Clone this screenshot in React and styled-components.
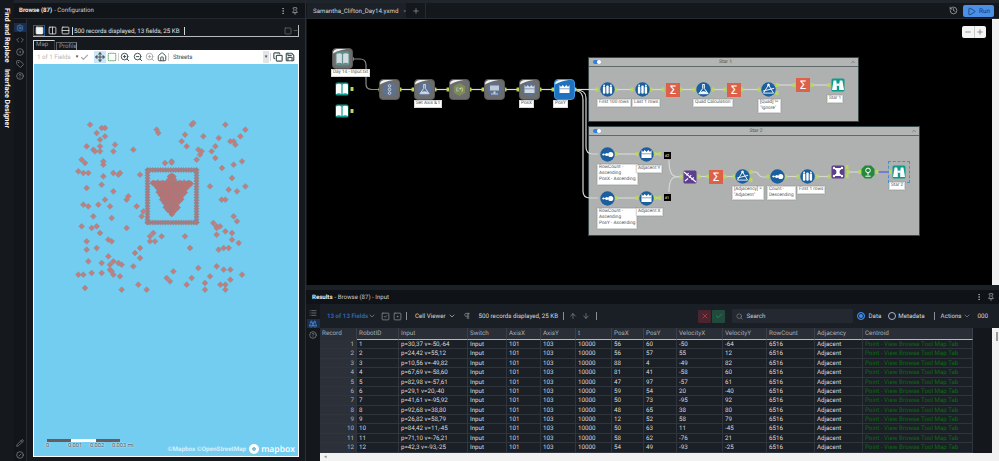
import React from 'react'
import styled, { createGlobalStyle } from 'styled-components'
import {
  ArrowDown, ArrowUp, Binoculars, Check, ChevronDown, ChevronUp, CircleDot, CircleHelp, CircleSlash, Code,
  Columns2, Copy, EllipsisVertical, History, House, List, Minus, Move, Pencil, Pilcrow, Pin, Play, Plus, Rows2,
  Save, Search, Settings, Square, SquareCheck, SquareDashed, SquareDot, Tag, X, ZoomIn, ZoomOut,
} from 'lucide-react'

const GlobalStyle = createGlobalStyle`
  html, body { margin: 0; padding: 0; background: #14171c; }
  * { box-sizing: border-box; }
`

const Page = styled.div`
  width: 999px;
  height: 461px;
  display: flex;
  overflow: hidden;
  background: #14171c;
  color: #d8dade;
  font-family: Roboto, "Noto Sans", sans-serif;
  font-size: 6.2px;
  text-rendering: geometricPrecision;
`

/* left rail */
const Rail = styled.div`
  width: 14px;
  padding-top: 8px;
  display: flex;
  flex-direction: column;
  align-items: center;
  gap: 6px;
  background: #15181d;
`
const RailLabel = styled.div`
  writing-mode: vertical-rl;
  color: #f2f2f2;
  font-weight: 700;
  font-size: 7.1px;
  line-height: 8px;
  white-space: nowrap;
`

/* configuration panel */
const ConfigPanel = styled.div`
  width: 292px;
  display: flex;
  flex-direction: column;
  border-top: 3px solid #20242b;
  border-right: 1px solid #2a2e35;
`
const PanelHead = styled.div`
  height: 16px;
  flex: none;
  display: flex;
  align-items: center;
  gap: 2px;
  padding: 0 6px 0 5px;
  background: #111419;
  color: #c9ccd1;
  font-size: 6.1px;
  border-bottom: 1px solid #23272e;
  b { color: #eceef0; font-weight: 700; }
`
const Spacer = styled.div`flex: 1;`
const HeadIcons = styled.div`
  display: flex;
  gap: 4px;
  color: #b9bcc2;
`
const ConfigBody = styled.div`
  flex: 1;
  display: flex;
  min-height: 0;
`
const IconStrip = styled.div`
  width: 13px;
  flex: none;
  display: flex;
  flex-direction: column;
  align-items: center;
  gap: 3px;
  padding: 4px 0 2px;
  background: #12151a;
  border-right: 1px solid #262a31;
  color: #8d9198;
`
const StripButton = styled.div`
  width: 13px;
  height: 9px;
  display: flex;
  align-items: center;
  justify-content: center;
  background: ${(p) => (p.$active ? '#1b2d4a' : 'transparent')};
  color: ${(p) => (p.$active ? '#4f8fe0' : 'inherit')};
`
const BrowseBody = styled.div`
  flex: 1;
  min-width: 0;
  display: flex;
  flex-direction: column;
  padding: 6px 6px 4px 6px;
  background: #15181d;
`
const BrowseBar = styled.div`
  height: 12px;
  flex: none;
  display: flex;
  align-items: center;
  gap: 1px;
  color: #e2e3e5;
  border-bottom: 1px solid #b9bcbf;
  border-right: 1px solid #b9bcbf;
  font-size: 6.2px;
`
const ViewButton = styled.div`
  width: 12px;
  height: 11px;
  display: flex;
  align-items: center;
  justify-content: center;
  color: #f3f3f3;
  border: 1px solid ${(p) => (p.$active ? '#1f5f9c' : 'transparent')};
`
const BarSep = styled.div`
  width: 1px;
  height: 8px;
  margin: 0 ${(p) => p.$gap ?? 2}px;
  background: ${(p) => p.$color ?? '#d5d6d8'};
`
const MapTabs = styled.div`
  height: 13px;
  flex: none;
  display: flex;
  align-items: flex-end;
  gap: 1px;
  color: #8e9196;
`
const MapTab = styled.div`
  height: ${(p) => (p.$active ? 10 : 8)}px;
  width: ${(p) => (p.$active ? 22 : 21)}px;
  padding-left: 2px;
  line-height: 7px;
  border: 1px solid ${(p) => (p.$active ? '#d6d7d9' : '#5f6267')};
  border-bottom: none;
  border-right-color: ${(p) => (p.$active ? '#3a3d42' : '#8d9095')};
`
const MapFrame = styled.div`
  flex: 1;
  min-height: 0;
  width: 266px;
  display: flex;
  flex-direction: column;
  background: #fff;
  padding: 0 1px 1px 1px;
`
const MapBar = styled.div`
  height: 14px;
  flex: none;
  display: flex;
  align-items: center;
  padding-left: 3px;
  background: #fff;
  color: #46555a;
  font-size: 6.2px;
`
const GreyText = styled.span`
  color: #b4b6b8;
  width: 37px;
  white-space: nowrap;
`
const ToolToggle = styled.div`
  width: 12px;
  height: 12px;
  margin-left: ${(p) => p.$gap ?? 0}px;
  display: flex;
  align-items: center;
  justify-content: center;
  background: ${(p) => (p.$active ? '#cde6f7' : 'transparent')};
`
const StreetsText = styled.span`
  color: #3f4448;
  width: 90px;
  margin-left: 4px;
`
const MiniDrop = styled.div`
  width: 6px;
  height: 12px;
  display: flex;
  align-items: center;
  justify-content: center;
  background: ${(p) => (p.$plain ? 'transparent' : '#e4e4e4')};
  color: #444;
  font-size: 5px;
`
const MapArea = styled.div`
  position: relative;
  flex: 1;
  min-height: 0;
  background: #73cdf0;
  svg { display: block; }
`
const ScaleBox = styled.div`
  position: absolute;
  left: 13px;
  bottom: 6px;
  width: 88px;
`
const ScaleTrack = styled.div`
  width: 73px;
  height: 3px;
  display: flex;
`
const ScaleSeg = styled.div`
  flex: 1;
  background: ${(p) => (p.$light ? '#fff' : '#6a5c5c')};
`
const ScaleNums = styled.div`
  display: flex;
  margin-top: 1px;
  color: #3d4a50;
  font-size: 5.6px;
  line-height: 7px;
  text-shadow: 0 0 2px #fff, 0 0 1px #fff;
  span { width: 24.4px; margin-left: -1px; white-space: nowrap; }
`
const MapCredit = styled.div`
  position: absolute;
  right: 3px;
  bottom: 2px;
  display: flex;
  align-items: center;
  gap: 3px;
  color: rgba(255, 255, 255, 0.72);
  font-weight: 700;
  font-size: 6.3px;
`
const MapboxWord = styled.span`
  display: flex;
  align-items: center;
  gap: 2px;
  color: #fff;
  font-family: "Open Sans", sans-serif;
  font-size: 8.6px;
  font-weight: 600;
  line-height: 10px;
`
const MapboxMark = styled.span`
  width: 10px;
  height: 10px;
  border-radius: 50%;
  background: #fff;
  border: 3px solid #fff;
  box-shadow: inset 0 0 0 1.4px #5fa8cc;
`

/* main column */
const Main = styled.div`
  flex: 1;
  min-width: 0;
  display: flex;
  flex-direction: column;
`
const TabBar = styled.div`
  height: 19px;
  flex: none;
  display: flex;
  align-items: stretch;
  border-top: 3px solid #20242b;
  background: #14171c;
  border-bottom: 1px solid #262a31;
`
const DocTab = styled.div`
  width: 99px;
  margin-left: 1px;
  padding-left: 6px;
  display: flex;
  align-items: center;
  gap: 4px;
  background: #1c2027;
  color: #d5d7da;
  white-space: nowrap;
  font-size: 6.2px;
`
const AddTab = styled.div`
  width: 20px;
  display: flex;
  align-items: center;
  justify-content: center;
  color: #9ca0a6;
  border-right: 1px solid #262a31;
`
const RunButton = styled.div`
  width: 31px;
  height: 12px;
  margin: 2px 5px 0 5px;
  padding-left: 4px;
  display: flex;
  align-items: center;
  gap: 3px;
  border-radius: 2px;
  background: #4a8fe8;
  color: #17345f;
  font-size: 6.4px;
`
const HistoryBox = styled.div`
  display: flex;
  align-items: center;
  color: #a8abb0;
`
const CanvasRow = styled.div`
  height: 266px;
  flex: none;
  display: flex;
`
const Canvas = styled.div`
  position: relative;
  flex: 1;
  margin-left: 1px;
  background: #000;
  overflow: hidden;
`
const WhiteBar = styled.div`
  width: 7px;
  flex: none;
  background: #f2f2f2;
  padding: ${(p) => p.$pad ?? 0}px 0 0 4px;
`
const BarThumb = styled.div`
  width: 2px;
  height: 9px;
  background: #9b9b9b;
`
const ZoomBox = styled.div`
  position: absolute;
  left: 655px;
  top: 7px;
  width: 24px;
  height: 12px;
  display: flex;
  border-radius: 2px;
  background: #f4f4f4;
  color: #8f9296;
`
const ZoomPart = styled.div`
  flex: 1;
  display: flex;
  align-items: center;
  justify-content: center;
  & + & { border-left: 1px solid #c9c9c9; }
`
const StarBox = styled.div`
  position: absolute;
  left: ${(p) => p.$x - 307}px;
  top: ${(p) => p.$y - 19}px;
  width: ${(p) => p.$w}px;
  height: ${(p) => p.$h}px;
  background: #aeb1b0;
  border: 1px solid #38474a;
`
const StarHead = styled.div`
  height: 9px;
  display: flex;
  align-items: center;
  justify-content: space-between;
  padding: 0 2px 0 4px;
  background: #b2b5b4;
  border-bottom: 1px solid #5e6a6a;
  color: #4b5052;
  font-size: 5px;
`
const Toggle = styled.div`
  width: 8px;
  height: 4.5px;
  border-radius: 3px;
  background: #2f7fe0;
  position: relative;
  &::after {
    content: '';
    position: absolute;
    right: 0.5px;
    top: 0.5px;
    width: 3.5px;
    height: 3.5px;
    border-radius: 50%;
    background: #fff;
  }
`
const WireLayer = styled.svg`
  position: absolute;
  left: 0;
  top: 0;
`
const ToolBox = styled.div`
  position: absolute;
  left: ${(p) => p.$x - 307 - p.$size / 2}px;
  top: ${(p) => p.$y - 19 - p.$size / 2}px;
  width: ${(p) => p.$size}px;
  height: ${(p) => p.$size}px;
  svg { display: block; }
`
const SigmaBox = styled(ToolBox)`
  display: flex;
  align-items: center;
  justify-content: center;
  background: #dd6148;
  color: #fff;
  font-family: "DejaVu Sans", sans-serif;
  font-size: 11.5px;
  line-height: 14px;
`
const NodeLabel = styled.div`
  position: absolute;
  left: ${(p) => p.$x - 307}px;
  top: ${(p) => p.$y - 19}px;
  width: max-content;
  min-width: ${(p) => p.$w}px;
  padding: 0 1px;
  background: #fff;
  color: #555;
  font-size: 4.7px;
  line-height: 6.2px;
  border: 0.5px solid #d8d8d8;
  box-shadow: 0 0 1px rgba(0, 0, 0, 0.3);
  white-space: pre;
`
const Tag_ = styled.div`
  position: absolute;
  left: ${(p) => p.$x - 307 - 3.5}px;
  top: ${(p) => p.$y - 19 - 3.5}px;
  width: 7px;
  height: 7px;
  background: #000;
  color: #e8e8e8;
  font-size: 4px;
  line-height: 7px;
  text-align: center;
`
const SelectBox = styled.div`
  position: absolute;
  left: ${888 - 307}px;
  top: ${161 - 19}px;
  width: 22px;
  height: 22px;
  border: 1px dashed #4a8fd0;
`

/* results */
const Results = styled.div`
  flex: 1;
  min-height: 0;
  display: flex;
  flex-direction: column;
  border-top: 5px solid #1c2027;
`
const ResultsHead = styled(PanelHead)`
  height: 14px;
  padding: 0 4px 0 6px;
  background: #0f1216;
  border-bottom: none;
`
const ResultsBody = styled.div`
  flex: 1;
  min-height: 0;
  display: flex;
`
const ResultsStrip = styled(IconStrip)`
  width: 14px;
  padding-top: 4px;
  gap: 2px;
  background: #14171c;
  border-right: none;
`
const ResultsMain = styled.div`
  flex: 1;
  min-width: 0;
  display: flex;
  flex-direction: column;
`
const ResultsTools = styled.div`
  height: 24px;
  flex: none;
  display: flex;
  align-items: center;
  padding-left: 7px;
  background: #1a1e25;
  color: #8b8f96;
`
const FieldsText = styled.span`
  color: #2c6cb5;
  font-weight: 600;
  width: 41px;
  white-space: nowrap;
`
const LightText = styled.span`
  color: #d7d9dc;
  white-space: nowrap;
  margin-left: ${(p) => p.$gap ?? 3}px;
  margin-right: ${(p) => p.$after ?? p.$gap ?? 3}px;
`
const MarkButton = styled.div`
  width: 13px;
  height: 13px;
  display: flex;
  align-items: center;
  justify-content: center;
  border-radius: 1px;
  background: ${(p) => p.$bg};
  color: ${(p) => p.$fg};
  & + & { margin-left: 1px; }
`
const SearchBox = styled.div`
  width: 121px;
  height: 14px;
  margin: 0 4px 0 7px;
  padding-left: 4px;
  display: flex;
  align-items: center;
  gap: 3px;
  border-radius: 1px;
  background: #242830;
  color: #c6c9cd;
`
const Radio = styled.span`
  width: 8px;
  height: 8px;
  flex: none;
  border-radius: 50%;
  border: 1px solid ${(p) => (p.$on ? '#3d8bef' : '#a5b4cc')};
  background: ${(p) => (p.$on ? '#3d8bef' : 'transparent')};
  box-shadow: ${(p) => (p.$on ? 'inset 0 0 0 1px #1a1e25' : 'none')};
`
const TableArea = styled.div`
  flex: 1;
  min-height: 0;
  display: flex;
`
const TableColumn = styled.div`
  width: 653px;
  flex: none;
  display: flex;
  flex-direction: column;
`
const TableRest = styled.div`
  flex: 1;
  background: #14171c;
`
const columns = '37px 42px 69px 39px 34px 35px 36px 32px 33px 46px 44px 48px 48px 110px'
const Grid = styled.div`
  display: grid;
  grid-template-columns: ${columns};
  grid-auto-rows: 9.38px;
  flex: 1;
  background: #1b1f26;
`
const HeadGrid = styled(Grid)`
  grid-auto-rows: 12px;
  flex: none;
  background: #2a2e36;
`
const HeadCell = styled.div`
  padding: 0 0 0 2px;
  line-height: 10px;
  color: #a9adb3;
  font-size: 6.3px;
  white-space: nowrap;
  overflow: hidden;
  border-right: 1px solid #3b4048;
  border-bottom: ${(p) => (p.$first ? '1px solid #2a2e36' : '1.5px solid #8fdf5a')};
`
const Cell = styled.div`
  padding-left: 2px;
  line-height: 9px;
  font-size: 6.2px;
  white-space: nowrap;
  overflow: hidden;
  color: ${(p) => (p.$green ? '#0b6b12' : '#d8dadd')};
  border-right: 1px solid #30353d;
  border-bottom: 1px solid #30353d;
`
const RecordCell = styled(Cell)`
  padding: 0 2px 0 0;
  text-align: right;
  color: #b6b9be;
  background: #2b3039;
`
const HScroll = styled.div`
  height: 8px;
  flex: none;
  display: flex;
  align-items: center;
  padding-left: 4px;
  background: #f2f2f2;
  color: #888;
  font-size: 5px;
`

/* map points, in zoomed pixels as read off the reference */
const pts = [
  [183,44],[218,54],[228,54],[203,69],[228,79],[213,89],[173,109],[213,109],[258,104],[193,119],[198,124],[213,124],[253,124],[313,119],[383,59],[388,69],[488,44],[493,39],[589,44],[649,59],[468,74],[523,79],[569,84],[634,79],[604,94],[614,94],[619,104],[458,94],[473,109],[559,109],[508,119],[518,124],[513,134],[548,124],[503,149],[559,144],[158,149],[168,159],[223,154],[223,164],[408,159],[428,154],[428,158],[614,164],[639,154],[579,174],[148,184],[163,189],[178,189],[253,189],[268,194],[273,189],[223,199],[333,194],[609,204],[173,234],[218,224],[253,244],[543,229],[599,239],[624,244],[649,229],[293,269],[298,259],[228,269],[578,269],[589,269],[163,284],[178,289],[208,284],[243,289],[323,289],[343,304],[338,319],[193,319],[248,324],[614,319],[624,334],[158,349],[188,354],[203,349],[293,354],[553,339],[563,349],[563,354],[573,349],[213,369],[589,364],[609,369],[563,374],[373,369],[363,379],[398,379],[468,379],[363,394],[378,394],[238,389],[248,394],[173,394],[609,389],[629,399],[173,419],[203,414],[333,414],[483,414],[569,419],[584,414],[599,414],[318,429],[238,439],[333,444],[178,454],[218,459],[253,454],[243,464],[268,459],[278,464],[313,469],[508,474],[563,469],[584,479],[604,479],[243,479],[248,484],[253,494],[188,489],[218,489],[148,494],[163,494],[273,499],[433,484],[488,504],[543,499],[639,494],[604,509],[413,504],[423,514],[528,519],[473,524],[574,524],[589,524],[328,524],[168,534],[278,539],[353,539],[528,539],[589,539],
].map(([x, y]) => [x / 3 + 30 - 35, y / 3 + 110 - 64])

const framePts = []
for (let i = 0; i <= 19; i++) {
  const t = i * 2.58
  framePts.push([148.5 + t - 35, 170 - 64], [148.5 + t - 35, 222.5 - 64])
  framePts.push([148.5 - 35, 170 + t * 1.07 - 64], [197.5 - 35, 170 + t * 1.07 - 64])
}

const arrowPts = []
for (let y = 183; y < 216; y += 2.4) {
  const half = Math.max(0.2, 19 * (1 - (y - 181.7) / 35) - ((y - 183) % 8) * 0.45 + 1)
  for (let x = -half; x <= half + 0.1; x += Math.max(half / Math.ceil(half / 1.9), 0.5)) {
    const jitter = Math.sin(x * 12.9 + y * 78.2) * 0.7
    arrowPts.push([172.7 + x - 35, y - 64 + jitter])
  }
}
for (const [dx, dy] of [[-2, -2.4], [2, -2.4], [0, -3.6], [0, -1], [-2.6, 0.6], [2.6, 0.6]]) {
  arrowPts.push([172.7 + dx - 35, 179 + dy - 64])
}

const Diamond = ({ x, y, fill = '#c67c79', r = 2.9, edge = '#7f94a2' }) => (
  <path
    d={`M${x} ${y - r}L${x + r} ${y}L${x} ${y + r}L${x - r} ${y}Z`}
    fill={fill}
    stroke={edge}
    strokeWidth="0.6"
  />
)

/* tool glyphs, drawn around 0,0 in a box about 14 wide */
const Glyph = ({ kind, color = '#fff' }) => {
  switch (kind) {
    case 'book':
      return (
        <g fill={color}>
          <path d="M-6 -4.5 Q-3 -6 -0.6 -4.5 V5 Q-3 3.5 -6 5Z" />
          <path d="M6 -4.5 Q3 -6 0.6 -4.5 V5 Q3 3.5 6 5Z" />
        </g>
      )
    case 'select':
      return (
        <g fill="none" stroke={color} strokeWidth="0.9">
          <circle cx="0" cy="-3.6" r="1.3" />
          <circle cx="0" cy="0" r="1.3" />
          <circle cx="0" cy="3.6" r="1.3" />
        </g>
      )
    case 'flask':
      return (
        <g fill="none" stroke={color} strokeWidth="1">
          <path d="M-1 -5 H1 M-0.8 -5 V-1 L-4.6 4.2 H4.6 L0.8 -1 V-5" />
          <path d="M-3 2.6 Q0 0.8 3 2.6 L4 4 H-4Z" fill={color} stroke="none" />
        </g>
      )
    case 'regex':
      return (
        <g>
          <path d="M0 -6.5 L5.8 -3.2 V3.2 L0 6.5 L-5.8 3.2 V-3.2Z" fill="#7d8a5c" />
          <text x="0" y="1.8" fontSize="5" fontWeight="700" textAnchor="middle" fill="#dfe5c8" fontFamily="Roboto">(.*)</text>
        </g>
      )
    case 'table':
      return (
        <g fill={color}>
          <rect x="-4.5" y="-4" width="9" height="5" opacity="0.85" />
          <rect x="-1" y="2" width="2" height="2" />
          <rect x="-3.5" y="4" width="7" height="0.9" />
        </g>
      )
    case 'crown':
      return (
        <g fill={color}>
          <path d="M-5 -4.5 L-3.5 -2.4 L-1.8 -4.5 L0 -2.4 L1.8 -4.5 L3.5 -2.4 L5 -4.5 V3.4 H-5Z" />
          <rect x="-5" y="-1" width="10" height="0.7" fill="#5b7ea8" />
        </g>
      )
    case 'sort':
      return (
        <g fill={color}>
          <circle cx="-4" cy="0" r="1.1" />
          <circle cx="-0.8" cy="0" r="1.6" />
          <circle cx="3.2" cy="0" r="2.6" />
          <rect x="-5" y="-0.3" width="8" height="0.6" />
        </g>
      )
    case 'bars':
      return (
        <g fill={color}>
          <rect x="-4.6" y="-3" width="2.4" height="7.2" rx="1" />
          <rect x="-1.2" y="-4" width="2.4" height="8.2" rx="1" />
          <rect x="2.2" y="-3" width="2.4" height="7.2" rx="1" />
          <circle cx="-3.4" cy="-4" r="0.9" />
          <circle cx="3.4" cy="-4" r="0.9" />
        </g>
      )
    case 'filter':
      return (
        <g fill="none" stroke={color} strokeWidth="0.9">
          <path d="M0 -4.6 L5 3.6 H-5Z" />
          <path d="M-5.6 1.6 L5.6 -1.2" />
          <circle cx="0" cy="-4.6" r="0.9" fill={color} />
        </g>
      )
    case 'binoculars':
      return (
        <g fill={color}>
          <path d="M-6 5 L-5 -1 L-4.4 -4.5 H-1.8 L-1.2 -1 V5Z" />
          <path d="M6 5 L5 -1 L4.4 -4.5 H1.8 L1.2 -1 V5Z" />
          <rect x="-1.2" y="-1.4" width="2.4" height="2.2" />
        </g>
      )
    case 'join':
      return (
        <g stroke={color} strokeWidth="1.1" fill="none">
          <path d="M-6 -5 L6 5" />
          <path d="M-3.6 -1.6 L-1.4 -4 M-1 0.6 L1.2 -1.8 M1.6 2.8 L3.8 0.4" />
          <path d="M-5 4 L-2 1.5" />
        </g>
      )
    case 'network':
      return (
        <g stroke={color} strokeWidth="0.7" fill={color}>
          <path d="M-4 -4 L0 0 L4 -4 M-4 4 L0 0 L4 4" />
          <circle cx="0" cy="0" r="1.8" stroke="none" />
          <circle cx="-4" cy="-4" r="1.2" stroke="none" />
          <circle cx="4" cy="-4" r="1.2" stroke="none" />
          <circle cx="-4" cy="4" r="1.2" stroke="none" />
          <circle cx="4" cy="4" r="1.2" stroke="none" />
        </g>
      )
    case 'pin':
      return (
        <g fill="none" stroke={color} strokeWidth="1">
          <circle cx="0" cy="-1.6" r="2.3" />
          <path d="M0 0.8 V3.4" />
          <path d="M-2.6 4.2 H2.6" />
        </g>
      )
    default:
      return null
  }
}

const Tile = ({ x, y, glyph, selected, disc = '#5d7290', tint }) => (
  <ToolBox $x={x} $y={y} $size={21}>
    <svg width="21" height="21" viewBox="-10.5 -10.5 21 21">
      <rect x="-10" y="-10" width="20" height="20" rx="3.5" fill={selected ? '#1f72bd' : '#6c6c6c'} stroke={selected ? '#3e96e6' : '#585858'} strokeWidth="1" />
      <path d="M-9.5 -5 Q-9.5 -9.5 -4 -9.5 H4 Q-4 -8.5 -9.5 -5Z" fill="#f2f2f2" />
      {tint ? <rect x="-7" y="-7" width="14" height="14" rx="1.5" fill={tint} /> : disc && <circle r="7.2" fill={selected ? '#1f72bd' : disc} />}
      <Glyph kind={glyph} color={selected ? '#fff' : '#d3dae2'} />
    </svg>
  </ToolBox>
)

const Disc = ({ x, y, glyph }) => (
  <ToolBox $x={x} $y={y} $size={15}>
    <svg width="15" height="15" viewBox="-7.5 -7.5 15 15">
      <circle r="7.2" fill="#1b5f9e" />
      <Glyph kind={glyph} />
    </svg>
  </ToolBox>
)

const Sigma = ({ x, y }) => <SigmaBox $x={x} $y={y} $size={14}>Σ</SigmaBox>

const Tinted = ({ x, y, glyph, fill, size = 14, shape }) => (
  <ToolBox $x={x} $y={y} $size={size}>
    <svg width={size} height={size} viewBox={`${-size / 2} ${-size / 2} ${size} ${size}`}>
      {shape === 'octagon' ? (
        <path d="M-3 -6.5 H3 L6.5 -3 V3 L3 6.5 H-3 L-6.5 3 V-3Z" fill={fill} />
      ) : (
        <rect x={-size / 2 + 0.5} y={-size / 2 + 0.5} width={size - 1} height={size - 1} rx="1.5" fill={fill} />
      )}
      <Glyph kind={glyph} />
    </svg>
  </ToolBox>
)

const straight = [
  [400, 89.5, 413], [435, 89.5, 448], [470, 89.5, 483], [505, 89.5, 518], [540, 89.5, 553], [575, 89.5, 597],
  [616, 89.5, 632], [651, 89.5, 663], [681, 89.5, 694], [713, 89.5, 725], [742, 89.5, 759], [777, 85, 794], [812, 85, 829],
  [616, 154, 637], [616, 198, 637], [655, 154, 660], [655, 198, 660],
  [699, 176.5, 708], [725, 176.5, 734], [786, 176.5, 798], [817, 176.5, 829], [848, 172, 860],
]

const curves = [
  'M352 59 H360 Q366 59 366 65 V84 Q366 89.5 372 89.5 H380',
  'M576 90 Q586 90 586 98 V147 Q586 154 593 154 H598',
  'M577 91 Q583 92 583 100 V191 Q583 198 590 198 H598',
  'M669 160 Q669 176 676 176.5 H681',
  'M669 192 Q669 177 676 177 H681',
  'M751 172 H755 Q758 172 759 175 Q760 177 763 177 H768',
]

const Port = ({ x, y }) => <rect x={x - 1.5} y={y - 2} width="3" height="4" rx="0.5" fill="#b7d85c" />

const Wires = () => (
  <WireLayer width="685" height="266" viewBox="307 19 685 266">
    <g fill="none" stroke="#d5d8d5" strokeWidth="1.2">
      {curves.map((d) => <path key={d} d={d} stroke={d.startsWith('M352') ? '#8b8b8b' : undefined} />)}
      {straight.map(([a, y, b]) => <path key={`${a}-${y}`} d={`M${a} ${y}H${b}`} />)}
      <path d="M877 172H888" stroke="#5a55dd" />
    </g>
    {straight.flatMap(([a, y, b]) => [<Port key={`a${a}-${y}`} x={a} y={y} />, <Port key={`b${b}-${y}`} x={b} y={y} />])}
    {[[352, 59], [352, 89], [352, 111], [380, 89.5], [777, 93], [751, 172], [751, 180], [847, 167], [847, 176], [890, 172], [877, 172], [681, 176.5], [768, 176.5]].map(([x, y]) => (
      <Port key={`p${x}-${y}`} x={x} y={y} />
    ))}
  </WireLayer>
)

const rows = [
  ['p=30,37 v=-50,-64', 56, 60, -50, -64],
  ['p=24,42 v=55,12', 56, 57, 55, 12],
  ['p=10,56 v=-49,82', 88, 4, -49, 82],
  ['p=67,69 v=-58,60', 81, 41, -58, 60],
  ['p=82,98 v=-57,61', 47, 97, -57, 61],
  ['p=29,1 v=20,-40', 59, 54, 20, -40],
  ['p=41,61 v=-95,92', 50, 73, -95, 92],
  ['p=92,68 v=38,80', 48, 65, 38, 80],
  ['p=26,82 v=58,79', 12, 52, 58, 79],
  ['p=84,42 v=11,-45', 50, 63, 11, -45],
  ['p=71,10 v=-76,21', 58, 62, -76, 21],
  ['p=42,3 v=-93,-25', 54, 49, -93, -25],
]
const headers = ['Record', 'RobotID', 'Input', 'Switch', 'AxisX', 'AxisY', 't', 'PosX', 'PosY', 'VelocityX', 'VelocityY', 'RowCount', 'Adjacency', 'Centroid']

const MapPoints = () => (
  <svg width="264" height="391" viewBox="0 0 264 391">
    {framePts.map(([x, y], i) => <Diamond key={`f${i}`} x={x} y={y} fill="#ab797d" r={2.6} edge="#8b8a92" />)}
    {arrowPts.map(([x, y], i) => <Diamond key={`a${i}`} x={x} y={y} fill="#c0726f" r={2.6} edge="#9a7c84" />)}
    {pts.map(([x, y], i) => <Diamond key={i} x={x} y={y} />)}
  </svg>
)

export default function App() {
  return (
    <Page>
      <GlobalStyle />
      <Rail>
        <RailLabel>Find and Replace</RailLabel>
        <RailLabel>Interface Designer</RailLabel>
      </Rail>

      <ConfigPanel>
        <PanelHead>
          <b>Browse (87)</b> - Configuration
          <Spacer />
          <HeadIcons>
            <EllipsisVertical size={8} />
            <Pin size={8} />
          </HeadIcons>
        </PanelHead>
        <ConfigBody>
          <IconStrip>
            <StripButton $active><Settings size={8} /></StripButton>
            <StripButton><Code size={8} /></StripButton>
            <StripButton><CircleDot size={8} /></StripButton>
            <StripButton><Tag size={8} /></StripButton>
            <StripButton><CircleHelp size={8} /></StripButton>
            <Spacer />
            <StripButton><Pencil size={8} /></StripButton>
            <StripButton><CircleSlash size={8} /></StripButton>
          </IconStrip>
          <BrowseBody>
            <BrowseBar>
              <ViewButton $active><Square size={9} fill="#f3f3f3" /></ViewButton>
              <ViewButton><Columns2 size={9} /></ViewButton>
              <ViewButton><Rows2 size={9} /></ViewButton>
              <BarSep $gap={0} />
              500 records displayed, 13 fields, 25 KB
              <BarSep $gap={3} />
              <Spacer />
              <Square size={8} color="#777" />
              <Minus size={5} color="#aaa" />
            </BrowseBar>
            <MapTabs>
              <MapTab $active>Map</MapTab>
              <MapTab>Profile</MapTab>
            </MapTabs>
            <MapFrame>
              <MapBar>
                <GreyText>1 of 1 Fields</GreyText>
                <MiniDrop $plain>▾</MiniDrop>
                <Check size={9} color="#a9a9a9" strokeWidth={3} />
                <ToolToggle $active $gap={5}><Move size={10} strokeWidth={2.6} /></ToolToggle>
                <ToolToggle><SquareDashed size={10} color="#1c8a2d" strokeWidth={2.4} /></ToolToggle>
                <BarSep $color="#cfcfcf" $gap={0} />
                <ToolToggle><ZoomIn size={10} strokeWidth={2.4} /></ToolToggle>
                <ToolToggle $gap={1}><ZoomOut size={10} strokeWidth={2.4} /></ToolToggle>
                <ToolToggle><ZoomIn size={10} color="#a9a9a9" strokeWidth={2.2} /></ToolToggle>
                <ToolToggle><House size={10} strokeWidth={2.4} /></ToolToggle>
                <BarSep $color="#cfcfcf" $gap={0} />
                <StreetsText>Streets</StreetsText>
                <MiniDrop>▾</MiniDrop>
                <BarSep $color="#cfcfcf" $gap={1} />
                <ToolToggle><Copy size={10} strokeWidth={2.8} /></ToolToggle>
                <ToolToggle><Save size={10} strokeWidth={2.8} /></ToolToggle>
              </MapBar>
              <MapArea>
                <MapPoints />
                <ScaleBox>
                  <ScaleTrack>
                    <ScaleSeg />
                    <ScaleSeg $light />
                    <ScaleSeg />
                  </ScaleTrack>
                  <ScaleNums>
                    <span>0</span><span>0.001</span><span>0.002</span><span>0.003 mi</span>
                  </ScaleNums>
                </ScaleBox>
                <MapCredit>
                  ©Mapbox ©OpenStreetMap
                  <MapboxWord><MapboxMark />mapbox</MapboxWord>
                </MapCredit>
              </MapArea>
            </MapFrame>
          </BrowseBody>
        </ConfigBody>
      </ConfigPanel>

      <Main>
        <TabBar>
          <DocTab>Samantha_Clifton_Day14.yxmd <X size={6} /></DocTab>
          <AddTab><Plus size={8} /></AddTab>
          <Spacer />
          <HistoryBox><History size={9} /></HistoryBox>
          <RunButton><Play size={9} />Run</RunButton>
        </TabBar>

        <CanvasRow>
          <Canvas>
            <StarBox $x={588} $y={57} $w={271} $h={65}>
              <StarHead><Toggle />Star 1<ChevronUp size={6} /></StarHead>
            </StarBox>
            <StarBox $x={588} $y={126} $w={332} $h={110}>
              <StarHead><Toggle />Star 2<ChevronUp size={6} /></StarHead>
            </StarBox>
            <Wires />

            <Tile x={342} y={58} glyph="book" tint="#5f8f86" />
            <Tinted x={342} y={89} glyph="book" fill="#0d9c8c" />
            <Tinted x={342} y={111} glyph="book" fill="#0d9c8c" />
            <Tile x={389} y={89.5} glyph="select" />
            <Tile x={424} y={89.5} glyph="flask" />
            <Tile x={459} y={89.5} glyph="regex" disc={null} />
            <Tile x={494} y={89.5} glyph="table" />
            <Tile x={529} y={89.5} glyph="crown" />
            <Tile x={564} y={89.5} glyph="crown" selected />

            <Disc x={607} y={89.5} glyph="bars" />
            <Disc x={642} y={89.5} glyph="bars" />
            <Sigma x={673} y={89.5} />
            <Disc x={703} y={89.5} glyph="flask" />
            <Sigma x={734} y={89.5} />
            <Disc x={768} y={89.5} glyph="filter" />
            <Sigma x={803} y={85} />
            <Tinted x={838} y={85} glyph="binoculars" fill="#0d9c8c" />

            <Disc x={607} y={154} glyph="sort" />
            <Disc x={646} y={154} glyph="crown" />
            <Disc x={607} y={198} glyph="sort" />
            <Disc x={646} y={198} glyph="crown" />
            <Tag_ $x={667} $y={155.5}>#2</Tag_>
            <Tag_ $x={667} $y={197}>#1</Tag_>
            <Tinted x={690} y={176.5} glyph="join" fill="#5d3e8f" />
            <Sigma x={716} y={176.5} />
            <Disc x={742} y={176} glyph="filter" />
            <Disc x={777} y={176} glyph="sort" />
            <Disc x={807} y={176} glyph="bars" />
            <Tinted x={838} y={172} glyph="network" fill="#5d3e8f" />
            <Tinted x={868} y={172} glyph="pin" fill="#25893c" shape="octagon" />
            <SelectBox />
            <Tinted x={899} y={172} glyph="binoculars" fill="#0d9c8c" />

            <NodeLabel $x={331} $y={69} $w={38}>Day 14 - Input.txt</NodeLabel>
            <NodeLabel $x={414} $y={100} $w={27}>Set Axis &amp; t</NodeLabel>
            <NodeLabel $x={519} $y={100} $w={14}>PosX</NodeLabel>
            <NodeLabel $x={553} $y={100} $w={14}>PosY</NodeLabel>
            <NodeLabel $x={597} $y={99} $w={31}>First 100 rows</NodeLabel>
            <NodeLabel $x={632} $y={99} $w={26}>Last 1 rows</NodeLabel>
            <NodeLabel $x={693} $y={99} $w={37}>Quad Calculation</NodeLabel>
            <NodeLabel $x={758} $y={99} $w={23}>{'[Quad] !=\n"Ignore"'}</NodeLabel>
            <NodeLabel $x={827} $y={95} $w={15}>Star 1</NodeLabel>
            <NodeLabel $x={597} $y={164} $w={37}>{'RowCount -\nAscending\nPosX - Ascending'}</NodeLabel>
            <NodeLabel $x={636} $y={165} $w={25}>Adjacent Y</NodeLabel>
            <NodeLabel $x={597} $y={208} $w={37}>{'RowCount -\nAscending\nPosY - Ascending'}</NodeLabel>
            <NodeLabel $x={636} $y={208} $w={25}>Adjacent X</NodeLabel>
            <NodeLabel $x={732} $y={186} $w={31}>{'[Adjacency] =\n"Adjacent"'}</NodeLabel>
            <NodeLabel $x={767} $y={186} $w={26}>{'Count -\nDescending'}</NodeLabel>
            <NodeLabel $x={797} $y={186} $w={26}>First 1 rows</NodeLabel>
            <NodeLabel $x={889} $y={182} $w={14}>Star 2</NodeLabel>

            <ZoomBox>
              <ZoomPart><Minus size={8} strokeWidth={3} /></ZoomPart>
              <ZoomPart><Plus size={8} strokeWidth={3} /></ZoomPart>
            </ZoomBox>
          </Canvas>
          <WhiteBar />
        </CanvasRow>

        <Results>
          <ResultsHead>
            <b>Results</b> - Browse (87) - Input
            <Spacer />
            <HeadIcons>
              <EllipsisVertical size={8} />
              <Pin size={8} />
            </HeadIcons>
          </ResultsHead>
          <ResultsBody>
            <ResultsStrip>
              <StripButton><List size={8} /></StripButton>
              <StripButton $active><Binoculars size={8} /></StripButton>
              <StripButton><CircleHelp size={8} /></StripButton>
            </ResultsStrip>
            <ResultsMain>
              <ResultsTools>
                <FieldsText>13 of 13 Fields</FieldsText>
                <ChevronDown size={8} />
                <BarSep $color="transparent" $gap={2} />
                <SquareCheck size={9} />
                <BarSep $color="transparent" $gap={1} />
                <SquareDot size={9} />
                <BarSep $color="#8a8e94" $gap={4} />
                <LightText $gap={4} $after={2}>Cell Viewer</LightText>
                <ChevronDown size={8} color="#c6c9cd" />
                <BarSep $color="transparent" $gap={3} />
                <Pilcrow size={8} />
                <LightText $gap={8} $after={5}>500 records displayed, 25 KB</LightText>
                <BarSep $color="#8a8e94" $gap={0} />
                <BarSep $color="transparent" $gap={2} />
                <ArrowUp size={8} />
                <BarSep $color="transparent" $gap={2} />
                <ArrowDown size={8} />
                <BarSep $color="#8a8e94" $gap={6} />
                <Spacer />
                <MarkButton $bg="#4a2530" $fg="#d04050"><X size={8} /></MarkButton>
                <MarkButton $bg="#1f4a3c" $fg="#2fa06a"><Check size={8} /></MarkButton>
                <SearchBox><Search size={7} color="#8b8f96" />Search</SearchBox>
                <Radio $on />
                <LightText $gap={3} $after={7}>Data</LightText>
                <Radio />
                <LightText $gap={2} $after={9}>Metadata</LightText>
                <BarSep $color="#8a8e94" $gap={0} />
                <LightText $gap={6} $after={1}>Actions</LightText>
                <ChevronDown size={8} />
                <LightText $gap={7} $after={11}>000</LightText>
              </ResultsTools>
              <TableArea>
                <TableColumn>
                  <HeadGrid>
                    {headers.map((h, i) => <HeadCell key={h} $first={i === 0}>{h}</HeadCell>)}
                  </HeadGrid>
                  <Grid>
                    {rows.map(([input, posX, posY, vx, vy], i) => (
                      <React.Fragment key={input}>
                        <RecordCell>{i + 1}</RecordCell>
                        <Cell>{i + 1}</Cell>
                        <Cell>{input}</Cell>
                        <Cell>Input</Cell>
                        <Cell>101</Cell>
                        <Cell>103</Cell>
                        <Cell>10000</Cell>
                        <Cell>{posX}</Cell>
                        <Cell>{posY}</Cell>
                        <Cell>{vx}</Cell>
                        <Cell>{vy}</Cell>
                        <Cell>6516</Cell>
                        <Cell>Adjacent</Cell>
                        <Cell $green>Point - View Browse Tool Map Tab</Cell>
                      </React.Fragment>
                    ))}
                  </Grid>
                </TableColumn>
                <TableRest />
                <WhiteBar $pad={4}><BarThumb /></WhiteBar>
              </TableArea>
              <HScroll>◂</HScroll>
            </ResultsMain>
          </ResultsBody>
        </Results>
      </Main>
    </Page>
  )
}
